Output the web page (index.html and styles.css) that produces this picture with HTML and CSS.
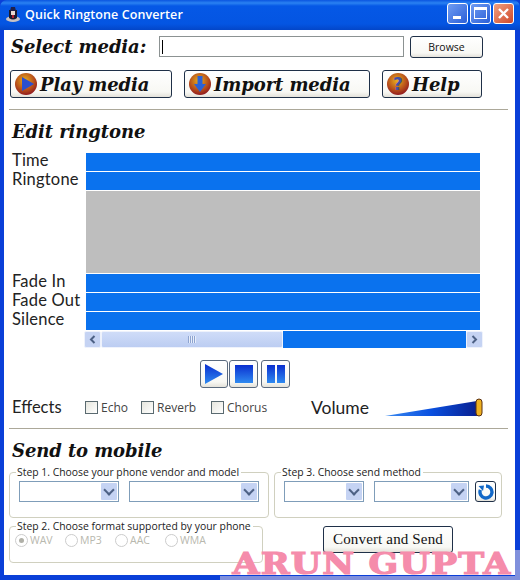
FILE: index.html
```html
<!DOCTYPE html>
<html>
<head>
    <title>Quick Ringtone Converter</title>
    <link rel="stylesheet" href="styles.css">
</head>
<body>
    <div class="window">
        <div class="titlebar">
            <svg class="app-icon" width="16" height="18" viewBox="0 0 16 18">
                <ellipse cx="8" cy="14" rx="7" ry="3" fill="#c9c2c4"/>
                <path d="M4 5 L12 5 L12 13 Q8 16 4 13 Z" fill="#1b1b2e"/>
                <path d="M6 2 L10 2 L11 6 L5 6 Z" fill="#20204a"/>
                <rect x="6" y="6" width="4" height="4" fill="#e8d8d0"/>
                <rect x="7" y="10" width="2" height="3" fill="#b02030"/>
            </svg>
            <span class="title-text">Quick Ringtone Converter</span>
            <div class="title-buttons">
                <div class="tb tb-min"><span class="min-glyph"></span></div>
                <div class="tb tb-max"><span class="max-glyph"></span></div>
                <div class="tb tb-close">
                    <svg width="13" height="13" viewBox="0 0 13 13"><path d="M2 2 L11 11 M11 2 L2 11" stroke="#fff" stroke-width="2.4"/></svg>
                </div>
            </div>
        </div>

        <div class="client">
            <div class="select-row">
                <span class="heading select-label">Select media:</span>
                <div class="text-input"><span class="caret"></span></div>
                <button class="xp-btn browse">Browse</button>
            </div>

            <div class="action-row">
                <button class="xp-btn action play-media">
                    <svg width="24" height="24" viewBox="0 0 24 24">
                        <circle cx="12" cy="12" r="11" fill="url(#orb)"/>
                        <path d="M8 5 L20 12 L8 19 Z" fill="#2a4fd0"/>
                        <defs>
                            <radialGradient id="orb" cx="45%" cy="35%" r="70%">
                                <stop offset="0" stop-color="#e8b020"/>
                                <stop offset="0.6" stop-color="#b8501a"/>
                                <stop offset="1" stop-color="#8a1020"/>
                            </radialGradient>
                        </defs>
                    </svg>
                    <span class="heading">Play media</span>
                </button>
                <button class="xp-btn action import-media">
                    <svg width="24" height="24" viewBox="0 0 24 24">
                        <circle cx="12" cy="12" r="11" fill="url(#orb)"/>
                        <path d="M9.5 4 L14.5 4 L14.5 12 L18 12 L12 20 L6 12 L9.5 12 Z" fill="#2a62d8"/>
                    </svg>
                    <span class="heading">Import media</span>
                </button>
                <button class="xp-btn action help">
                    <svg width="24" height="24" viewBox="0 0 24 24">
                        <circle cx="12" cy="12" r="11" fill="url(#orb)"/>
                        <text x="12" y="18" text-anchor="middle" class="help-mark">?</text>
                    </svg>
                    <span class="heading">Help</span>
                </button>
            </div>

            <hr class="rule rule-top">

            <div class="heading section-title edit-title">Edit ringtone</div>

            <div class="tracks">
                <div class="track-label">Time</div><div class="track"></div>
                <div class="track-label">Ringtone</div><div class="track"></div>
                <div></div><div class="wave"></div>
                <div class="track-label">Fade In</div><div class="track"></div>
                <div class="track-label">Fade Out</div><div class="track"></div>
                <div class="track-label">Silence</div><div class="track"></div>
            </div>

            <div class="hscroll">
                <div class="sb-btn">
                    <svg width="9" height="9" viewBox="0 0 9 9"><path d="M6.5 1 L3 4.5 L6.5 8" fill="none" stroke="#4d6185" stroke-width="2"/></svg>
                </div>
                <div class="sb-thumb"><span class="grip"></span></div>
                <div class="sb-rest"></div>
                <div class="sb-btn">
                    <svg width="9" height="9" viewBox="0 0 9 9"><path d="M2.5 1 L6 4.5 L2.5 8" fill="none" stroke="#4d6185" stroke-width="2"/></svg>
                </div>
            </div>

            <div class="transport">
                <button class="xp-btn t-btn">
                    <svg width="18" height="20" viewBox="0 0 18 20"><defs><linearGradient id="tg" x1="0" y1="0" x2="0" y2="1"><stop offset="0" stop-color="#0a2fd0"/><stop offset="1" stop-color="#2f8af0"/></linearGradient></defs><path d="M0 0 L18 10 L0 20 Z" fill="url(#tg)"/></svg>
                </button>
                <button class="xp-btn t-btn stop">
                    <svg width="18" height="18" viewBox="0 0 18 18"><rect width="18" height="18" fill="url(#tg)"/></svg>
                </button>
                <button class="xp-btn t-btn pause">
                    <svg width="18" height="18" viewBox="0 0 18 18"><rect width="8" height="18" fill="url(#tg)"/><rect x="10" width="8" height="18" fill="url(#tg)"/></svg>
                </button>
            </div>

            <div class="effects">
                <span class="track-label effects-label">Effects</span>
                <label class="check echo"><span class="box"></span>Echo</label>
                <label class="check reverb"><span class="box"></span>Reverb</label>
                <label class="check chorus"><span class="box"></span>Chorus</label>
                <span class="track-label volume-label">Volume</span>
                <svg class="volume" width="98" height="20" viewBox="0 0 98 20">
                    <defs><linearGradient id="vg" x1="0" y1="0" x2="1" y2="0"><stop offset="0" stop-color="#3a8af0"/><stop offset="0.5" stop-color="#0a50e0"/><stop offset="1" stop-color="#0a2090"/></linearGradient></defs>
                    <path d="M0 18 L92 3 L92 18 Z" fill="url(#vg)"/>
                    <rect x="91" y="1" width="6" height="17" rx="3" fill="#eeb020" stroke="#5a3010"/>
                </svg>
            </div>

            <hr class="rule rule-bottom">

            <div class="heading section-title send-title">Send to mobile</div>

            <div class="send">
                <div class="send-left">
                    <fieldset class="group step1">
                        <legend>Step 1. Choose your phone vendor and model</legend>
                        <div class="select sel-vendor"><span class="arrow"></span></div>
                        <div class="select sel-model"><span class="arrow"></span></div>
                    </fieldset>
                    <fieldset class="group step2">
                        <legend>Step 2. Choose format supported by your phone</legend>
                        <label class="radio"><span class="dot on"></span>WAV</label>
                        <label class="radio"><span class="dot"></span>MP3</label>
                        <label class="radio"><span class="dot"></span>AAC</label>
                        <label class="radio"><span class="dot"></span>WMA</label>
                    </fieldset>
                </div>
                <div class="send-right">
                    <fieldset class="group step3">
                        <legend>Step 3. Choose send method</legend>
                        <div class="select sel-method"><span class="arrow"></span></div>
                        <div class="select sel-carrier"><span class="arrow"></span></div>
                        <button class="xp-btn refresh">
                            <svg width="16" height="16" viewBox="0 0 16 16"><path d="M8 2 A6 6 0 1 1 2.4 5.8" fill="none" stroke="#1268c8" stroke-width="3.4"/><path d="M0.5 2 L6 1.5 L5 7 Z" fill="#1268c8"/></svg>
                        </button>
                    </fieldset>
                    <button class="xp-btn convert">Convert and Send</button>
                </div>
            </div>
        </div>

        <div class="wm-band"></div>
        <div class="wm-side"></div>
        <div class="watermark">ARUN GUPTA</div>
    </div>
</body>
</html>
```

FILE: styles.css
```css
* {
    box-sizing: border-box;
}

html, body {
    margin: 0;
    padding: 0;
}

body {
    width: 520px;
    height: 580px;
    overflow: hidden;
    background: #fff;
    font-family: "Open Sans", "Noto Sans", sans-serif;
}

.window {
    position: relative;
    width: 520px;
    height: 580px;
    background: #0a3fd8;
    padding: 0 5px 5px 4px;
    display: flex;
    flex-direction: column;
    overflow: hidden;
}

.titlebar {
    height: 30px;
    margin: 0 -5px 0 -4px;
    padding: 0 5px 0 5px;
    display: flex;
    align-items: center;
    background: linear-gradient(to bottom, #0a55e0 0, #2a82f2 3px, #0558e6 6px, #0455e2 24px, #0346c8 30px);
    border-radius: 7px 7px 0 0;
}

.app-icon {
    margin-right: 4px;
    margin-top: -3px;
}

.title-text {
    font-family: "Open Sans", sans-serif;
    font-size: 12.5px;
    font-weight: 600;
    letter-spacing: 0.1px;
    color: #fff;
    margin-top: -2px;
}

.title-buttons {
    margin-left: auto;
    margin-top: -4px;
    margin-right: 1px;
    display: flex;
    gap: 2px;
}

.tb {
    width: 21px;
    height: 21px;
    border: 1px solid #fff;
    border-radius: 3px;
    display: flex;
    align-items: center;
    justify-content: center;
    background: linear-gradient(135deg, #6f9cf2, #2a5fd8);
}

.tb-close {
    background: linear-gradient(135deg, #f0a080, #d0492a);
}

.min-glyph {
    width: 8px;
    height: 3px;
    background: #fff;
    margin-top: 8px;
    margin-right: 2px;
}

.max-glyph {
    width: 13px;
    height: 12px;
    border: 1px solid #fff;
    border-top-width: 3px;
}

.client {
    position: relative;
    flex: 1;
    background: #fff;
    padding: 6px 7px 0 5px;
}

.heading {
    font-family: "DejaVu Serif", serif;
    font-weight: bold;
    font-style: italic;
    font-size: 18px;
    letter-spacing: -0.1px;
    color: #111;
}

.xp-btn {
    font-family: "Open Sans", sans-serif;
    background: linear-gradient(to bottom, #fff, #f8f8f4 80%, #e4e2da);
    border: 1px solid #1f3048;
    border-radius: 3px;
    padding: 0;
    display: flex;
    align-items: center;
    justify-content: center;
}

.select-row {
    display: flex;
    align-items: flex-start;
    height: 22px;
}

.select-label {
    width: 150px;
    padding-left: 2px;
    line-height: 22px;
    white-space: nowrap;
}

.text-input {
    width: 245px;
    height: 21px;
    border: 1px solid #8c9292;
    padding: 3px 2px;
}

.caret {
    display: block;
    width: 1px;
    height: 14px;
    background: #000;
}

.browse {
    width: 73px;
    height: 22px;
    margin-left: 6px;
    font-size: 10.5px;
    color: #111;
}

.action-row {
    display: flex;
    margin: 12px 0 0 1px;
    height: 28px;
}

.action {
    justify-content: flex-start;
    padding-left: 3px;
    gap: 2px;
}

.play-media {
    width: 162px;
}

.import-media {
    width: 186px;
    margin-left: 12px;
}

.help {
    width: 100px;
    margin-left: 12px;
}

.help-mark {
    font-family: "DejaVu Sans", sans-serif;
    font-size: 17px;
    font-weight: bold;
    fill: #3f4fa8;
}

.rule {
    border: 0;
    height: 1px;
    background: #aca899;
    margin: 0;
    width: 499px;
}

.rule-top {
    margin-top: 11px;
}

.section-title {
    line-height: 22px;
}

.edit-title {
    margin: 11px 0 0 3px;
}

.tracks {
    display: grid;
    grid-template-columns: 77px 394px;
    grid-template-rows: 18px 18px 82px 18px 18px 18px;
    row-gap: 1px;
    margin-top: 10px;
}

.track-label {
    font-family: Lato, "Open Sans", sans-serif;
    font-size: 16.5px;
    line-height: 15px;
    letter-spacing: 0.2px;
    color: #222;
    padding-left: 3px;
    white-space: nowrap;
}

.track {
    background: #0a72ee;
}

.wave {
    background: #bebebe;
}

.hscroll {
    display: flex;
    width: 399px;
    height: 17px;
    margin: 1px 0 0 75px;
}

.sb-btn {
    width: 17px;
    height: 17px;
    background: #c5d3f3;
    border: 1px solid #eef2fc;
    border-radius: 2px;
    display: flex;
    align-items: center;
    justify-content: center;
}

.sb-thumb {
    width: 182px;
    background: linear-gradient(to bottom, #cfdcf8, #bccdf2);
    border: 1px solid #eef2fc;
    border-radius: 2px;
    display: flex;
    align-items: center;
    justify-content: center;
}

.grip {
    width: 8px;
    height: 7px;
    background: repeating-linear-gradient(to right, #8ea4d0 0 1px, #e8eefb 1px 2px);
}

.sb-rest {
    flex: 1;
    background: #0a72ee;
}

.transport {
    display: flex;
    gap: 1px;
    margin: 12px 0 0 191px;
    height: 28px;
}

.t-btn {
    width: 28px;
    height: 28px;
    border-color: #5a6a7e;
}

.stop {
    width: 29px;
}

.pause {
    margin-left: 2px;
    width: 29px;
}

.effects {
    display: flex;
    align-items: center;
    height: 20px;
    margin-top: 9px;
}

.effects-label {
    width: 76px;
    font-size: 16.5px;
    letter-spacing: 0;
}

.check {
    display: flex;
    align-items: center;
    font-size: 12px;
    color: #444;
    gap: 3px;
}

.box {
    width: 13px;
    height: 13px;
    border: 1px solid #5a6a70;
    background: linear-gradient(135deg, #e6e6de, #fff);
}

.echo {
    width: 56px;
}

.reverb {
    width: 70px;
}

.chorus {
    width: 100px;
}

.volume-label {
    width: 74px;
    font-size: 17.5px;
    letter-spacing: 0;
    padding-left: 0;
}

.volume {
    margin-top: 2px;
}

.rule-bottom {
    margin-top: 11px;
}

.send-title {
    margin: 11px 0 0 3px;
}

.send {
    display: flex;
    margin-top: 4px;
    align-items: flex-start;
}

.send-left {
    width: 265px;
    display: flex;
    flex-direction: column;
    gap: 2px;
}

.group {
    margin: 0;
    padding: 0 9px;
    border: 1px solid #d0d0bf;
    border-radius: 4px;
    display: flex;
}

.group legend {
    font-size: 10.4px;
    line-height: 13px;
    padding: 0 2px 0 1px;
    margin-left: -3px;
    color: #222;
    white-space: nowrap;
}

.step1 {
    width: 259px;
    height: 52px;
    padding-top: 2px;
    gap: 10px;
}

.step2 {
    width: 254px;
    height: 43px;
    padding: 0 0 0 5px;
}

.step2 legend {
    margin-left: 1px;
}

.select {
    height: 21px;
    border: 1px solid #7f9db9;
    position: relative;
}

.arrow {
    position: absolute;
    right: 1px;
    top: 1px;
    width: 16px;
    height: 17px;
    background: #c5d3f3;
    border-radius: 1px;
}

.arrow::after {
    content: "";
    position: absolute;
    left: 4px;
    top: 3px;
    width: 6px;
    height: 6px;
    border-right: 2px solid #4d6185;
    border-bottom: 2px solid #4d6185;
    transform: rotate(45deg);
}

.sel-vendor {
    width: 100px;
}

.sel-model {
    width: 130px;
}

.radio {
    width: 50px;
    display: flex;
    align-items: center;
    gap: 2px;
    font-size: 10.5px;
    color: #b8b8ae;
}

.dot {
    width: 13px;
    height: 13px;
    border: 1px solid #ccc;
    border-radius: 50%;
    display: flex;
    align-items: center;
    justify-content: center;
}

.dot.on::after {
    content: "";
    width: 5px;
    height: 5px;
    border-radius: 50%;
    background: #b0b0a8;
}

.send-right {
    display: flex;
    flex-direction: column;
}

.step3 {
    width: 228px;
    height: 52px;
    padding: 2px 0 0 9px;
}

.sel-method {
    width: 80px;
}

.sel-carrier {
    width: 95px;
    margin-left: 10px;
}

.refresh {
    width: 21px;
    height: 21px;
    margin-left: 6px;
    border-color: #1f3048;
}

.convert {
    width: 130px;
    height: 27px;
    margin: 8px 0 0 49px;
    font-family: "Liberation Serif", serif;
    font-size: 15px;
    letter-spacing: 0.15px;
    color: #111;
}

.wm-band {
    position: absolute;
    left: 220px;
    right: 0;
    bottom: 0;
    height: 4px;
    background: #8090dc;
}

.wm-side {
    position: absolute;
    right: 0;
    bottom: 0;
    width: 5px;
    height: 30px;
    background: #8090dc;
}

.watermark {
    position: absolute;
    right: 8px;
    top: 547px;
    font-family: "DejaVu Serif", serif;
    font-weight: bold;
    font-size: 30px;
    line-height: 34px;
    letter-spacing: 1px;
    color: #f58cab;
    -webkit-text-stroke: 1.2px #f58cab;
    white-space: nowrap;
    transform: scaleX(1.16);
    transform-origin: right center;
}
```
